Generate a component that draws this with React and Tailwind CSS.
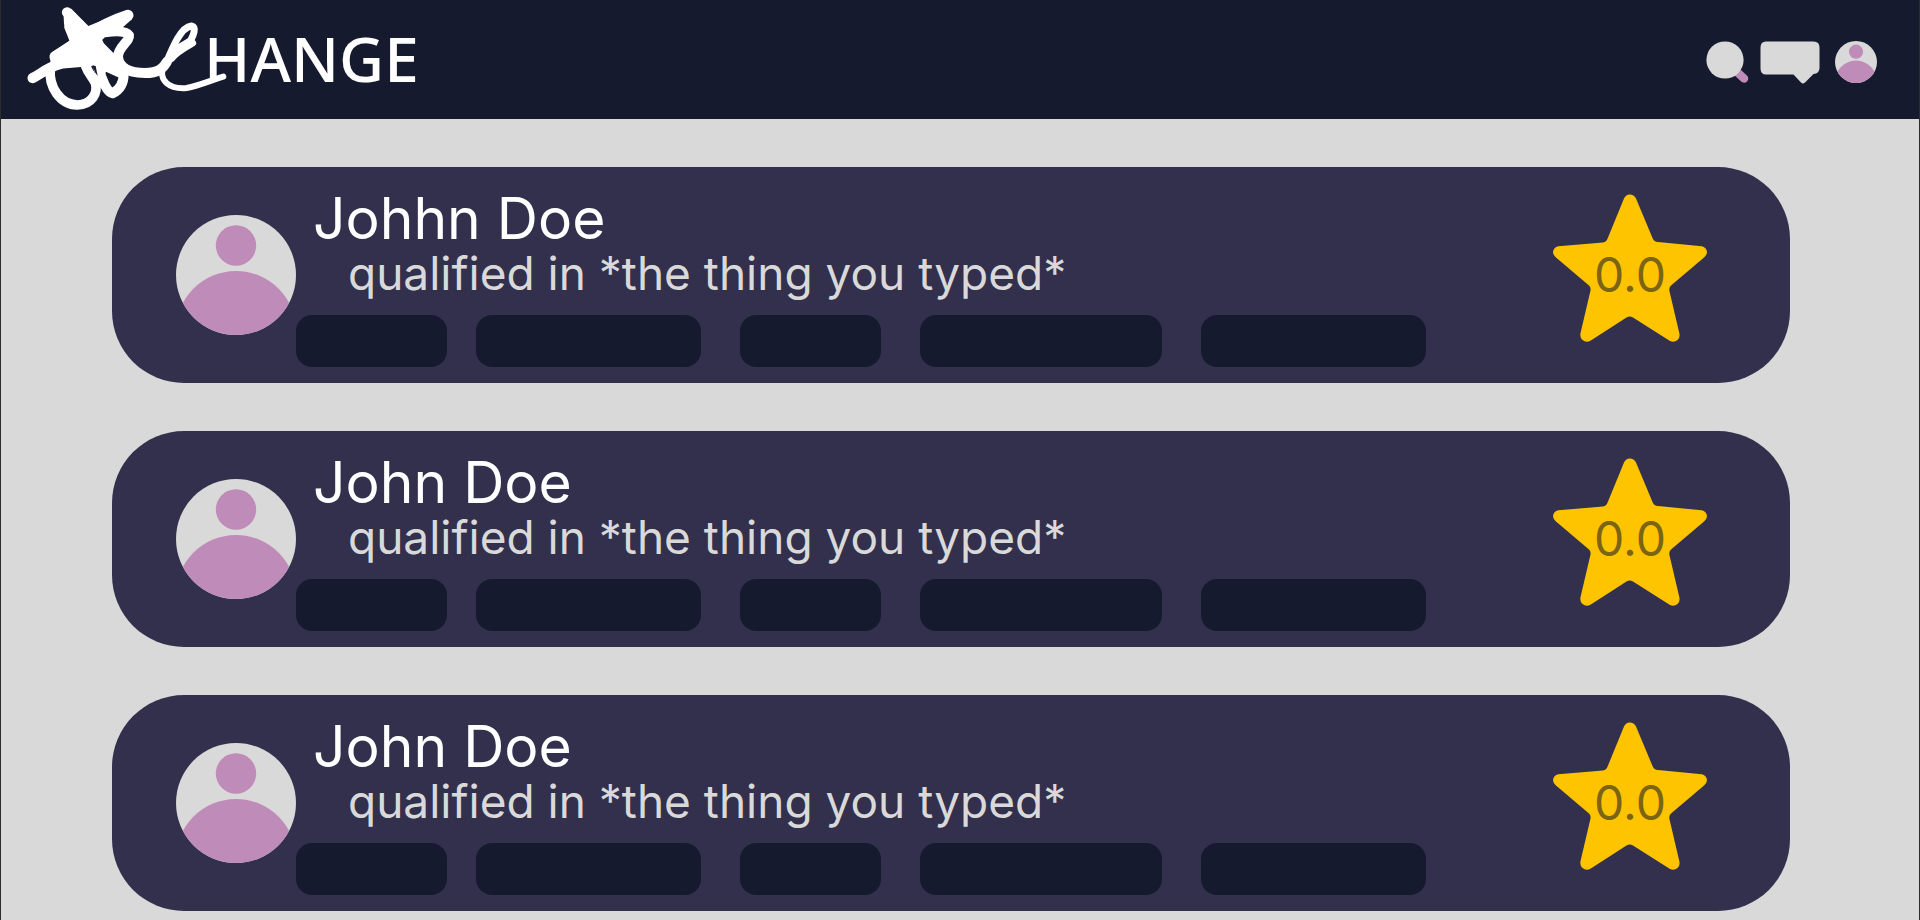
const people = [
  { id: 1, name: "Johhn Doe", rating: "0.0" },
  { id: 2, name: "John Doe", rating: "0.0" },
  { id: 3, name: "John Doe", rating: "0.0" },
];

const tags = [
  "w-[151px] mr-[29px]",
  "w-[225px] mr-[39px]",
  "w-[141px] mr-[39px]",
  "w-[242px] mr-[39px]",
  "w-[225px]",
];

function Avatar({ id, className }) {
  return (
    <svg viewBox="0 0 120 120" className={className} aria-hidden="true">
      <clipPath id={id}>
        <circle cx="60" cy="60" r="60" />
      </clipPath>
      <circle cx="60" cy="60" r="60" fill="#d9d9d9" />
      <g fill="#bf8bb9" clipPath={`url(#${id})`}>
        <circle cx="60" cy="30.500" r="20.200" />
        <circle cx="60" cy="116" r="60" />
      </g>
    </svg>
  );
}

function Logo() {
  return (
    <svg viewBox="0 0 440 119" className="h-[119px] w-[440px]" role="img" aria-label="Change">
      <g transform="translate(19 0) scale(0.3333)" fill="none" stroke="#fff" strokeLinecap="round" strokeLinejoin="round">
        <path fill="#fff" stroke="none" d="M130 28 L154 26 L205 78 L318 32 L336 58 L306 84 L262 104 L244 122 L278 157 L308 180 L322 225 L294 232 L258 215 L245 250 L219 198 L112 207 L92 195 L90 165 L152 120 L132 72 Z" />
        <path strokeWidth="31" d="M141 37 L235 130 M148 80 L172 140" />
        <path strokeWidth="33" d="M324 46 C280 60 240 80 205 105 L105 170" />
        <path strokeWidth="30" d="M255 97 C290 92 320 92 327 106 C330 124 294 140 294 170 C296 205 330 218 375 219 C415 219 430 205 441 185" />
        <path strokeWidth="30" d="M236 205 C245 240 262 278 278 280 C298 270 311 250 311 222" />
        <path strokeWidth="29" d="M91 205 C85 260 120 314 172 315 C215 314 235 280 226 248 C215 228 205 220 197 198" />
        <path strokeWidth="31" d="M38 234 C60 224 80 203 120 192" />
        <path strokeWidth="21" d="M434 200 C455 150 480 82 514 78 C532 82 518 110 512 122 M518 129 C490 145 470 155 455 175" />
        <path strokeWidth="18" d="M430 195 C414 245 450 268 500 264 C540 256 575 240 610 230" />
        <path strokeWidth="14" d="M515 116 L462 148 L450 172" />
        <path fill="#161a2f" stroke="none" d="M217 196 L227 198 L233 228 L226 218 Z" />
      </g>
      <text x="203" y="82" fill="#fff" fontSize="62" className="font-['Noto_Sans'] font-medium">HANGE</text>
    </svg>
  );
}

function SearchIcon() {
  return (
    <svg viewBox="0 0 44 44" className="size-11" aria-hidden="true">
      <path d="M31 31 L38 37.500" stroke="#bf8bb9" strokeWidth="8.500" strokeLinecap="round" />
      <circle cx="19" cy="19" r="18.600" fill="#d9d9d9" />
    </svg>
  );
}

function ChatIcon() {
  return (
    <svg viewBox="0 0 60 44" className="h-11 w-[60px]" aria-hidden="true">
      <path
        fill="#d9d9d9"
        d="M6 0.500 H53.500 Q59.500 0.500 59.500 6.500 V27 Q59.500 32.500 53.500 33 L45 41.500 Q43 43.500 41 41.500 L33.500 33.500 H6 Q0.500 33.500 0.500 27.500 V6.500 Q0.500 0.500 6 0.500 Z"
      />
    </svg>
  );
}

function Star({ rating }) {
  return (
    <div className="mt-[27px] grid shrink-0 place-items-center self-start">
      <svg viewBox="0 0 154 148" className="col-start-1 row-start-1 h-[148px] w-[154px]" aria-hidden="true">
        <path
          fill="#ffc400"
          d="M71 4.500 Q73 0.500 76.700 0.500 Q81 0.500 83 4.500 L99.500 44 Q101 47.800 105 48 L148.700 52.300 Q153.500 53.500 154 58 Q154 61 151 63.500 L118 91.500 Q116 93 116.300 96.500 L126.500 140 Q127 144 124.500 146 Q121 149 117 147 L80 123.500 Q76.700 121.500 73.500 123.500 L37 147 Q33 149 29.500 146 Q27 144 27.300 140 L37.500 96.500 Q38 93 36 91.500 L3 63.500 Q0 61 0 58 Q0.500 53.500 5.300 52.300 L50 48.500 Q53.500 48 54.800 44 Z"
        />
      </svg>
      <span className="col-start-1 row-start-1 pt-3.5 text-5xl leading-none font-normal text-[#7b6414]">{rating}</span>
    </div>
  );
}

function PersonCard({ person }) {
  return (
    <article className="flex h-[216px] items-center rounded-[72px] bg-[#32304d] pr-[83px] pl-16">
      <Avatar id={`avatar-${person.id}`} className="size-[120px] shrink-0" />
      <div className="flex-1 self-stretch pt-[22px]">
        <h2 className="pl-[17px] text-[57px] leading-[60px] font-normal text-white">{person.name}</h2>
        <p className="pl-[52px] text-[46px] leading-[48px] font-normal text-[#d9d9d9]">
          qualified in *the thing you typed*
        </p>
        <div className="mt-[18px] flex">
          {tags.map((tag, i) => (
            <span key={i} className={`h-[52px] rounded-2xl bg-[#161a2f] ${tag}`} />
          ))}
        </div>
      </div>
      <Star rating={person.rating} />
    </article>
  );
}

export default function App() {
  return (
    <div className="min-h-screen border-x border-[#2c2c2c] bg-[#d9d9d9] font-[Inter,sans-serif]">
      <header className="flex h-[119px] items-center justify-between bg-[#161a2f] pr-[42px]">
        <a href="#home">
          <Logo />
        </a>
        <nav className="flex items-start pt-1.5">
          <button type="button" aria-label="Search" className="mr-2.5">
            <SearchIcon />
          </button>
          <button type="button" aria-label="Messages" className="mr-[15px]">
            <ChatIcon />
          </button>
          <button type="button" aria-label="Profile">
            <Avatar id="avatar-me" className="size-[42px]" />
          </button>
        </nav>
      </header>
      <main className="flex flex-col gap-12 pt-12 pr-[129px] pl-[111px]">
        {people.map((person) => (
          <PersonCard key={person.id} person={person} />
        ))}
      </main>
    </div>
  );
}
